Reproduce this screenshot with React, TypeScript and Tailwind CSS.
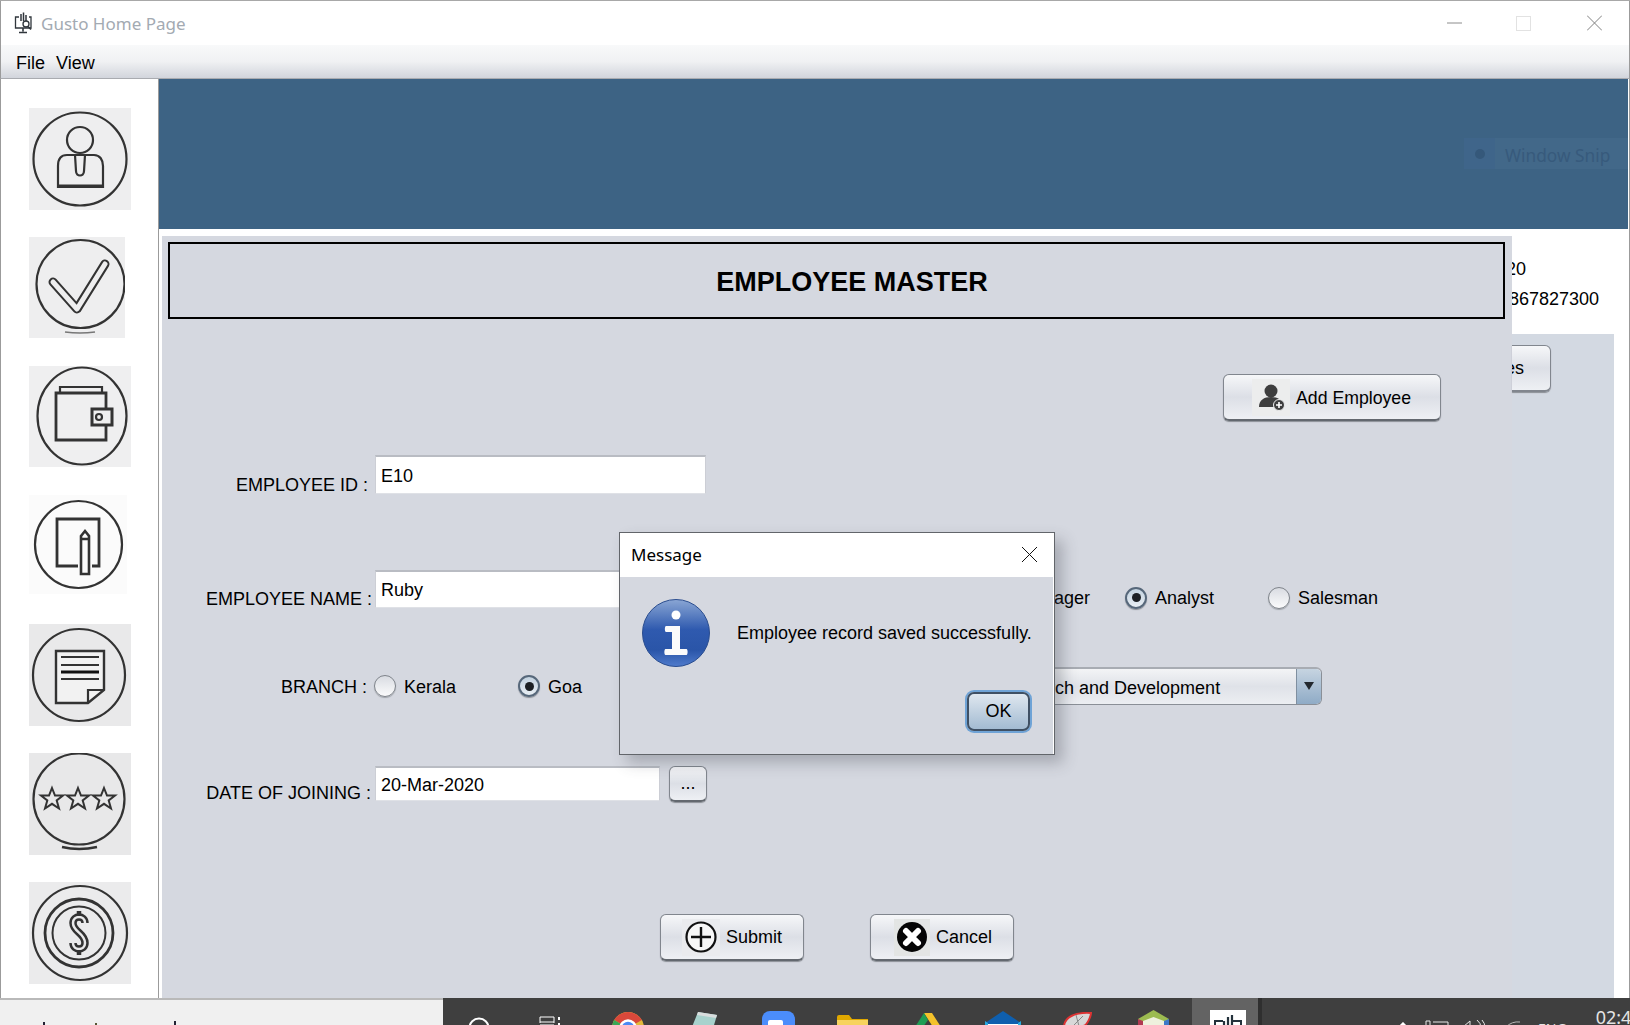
import { ReactNode } from "react";

const btn =
  "flex items-center rounded-[6px] border border-[#81868e] border-b-2 border-b-[#63686f] bg-linear-to-b from-[#f6f7f9] via-[#dcdfe6] to-[#eef0f4] shadow-[0_1px_1px_#8b8f96]";
const field =
  "flex items-center bg-white pt-[2px] pl-[5px] border-t-2 border-t-[#b9bcc3] border-x border-x-[#ccced5] border-b border-b-[#dfe1e6]";

function AppIcon() {
  return (
    <svg width="21" height="22" viewBox="0 0 21 22" fill="none" stroke="#30363c" strokeWidth="1.3">
      <path d="M5 5H1.5V16H17V5H15" />
      <path d="M7 9V2M9.5 9V0.5M12 9V3" strokeWidth="1.5" />
      <circle cx="12" cy="12" r="3" />
      <path d="M14 14.5L17 17.5M9 16V19.5M5 20.5H13" strokeWidth="1.6" />
    </svg>
  );
}

const sideBoxes = ["0 0 102 102", "0 0 96 101", "0 0 102 101", "0 0 98 99", "0 0 102 102", "0 0 102 102", "0 0 102 102"];

function SideIcon({ kind }: { kind: number }) {
  const s = { fill: "none", stroke: "#333333", strokeWidth: 2.2 };
  return (
    <svg viewBox={sideBoxes[kind]} className="h-full w-full">
      {kind === 0 && (
        <g {...s}>
          <circle cx="51" cy="51" r="46.5" />
          <circle cx="51" cy="32" r="13" />
          <path d="M46 47H38C31 47 29 52 29 58V79H74V58C74 52 71 47 65 47H56M46 47L47 63C47 69 55 69 55 63L56 47M46 47H56" />
          <path d="M29 78H74" strokeWidth="3" />
        </g>
      )}
      {kind === 1 && (
        <g fill="none">
          <circle cx="51.5" cy="47" r="44" stroke="#333333" strokeWidth="2.2" />
          <path d="M24 45L48 72L76 27" stroke="#333333" strokeWidth="9" strokeLinecap="round" strokeLinejoin="round" />
          <path d="M24 45L48 72L76 27" stroke="#eeeeef" strokeWidth="5" strokeLinecap="round" strokeLinejoin="round" />
          <path d="M36 95Q51 97 66 95" stroke="#777" strokeWidth="1.5" />
        </g>
      )}
      {kind === 2 && (
        <g {...s}>
          <ellipse cx="53" cy="50" rx="44.5" ry="48.5" />
          <path d="M28 27H77V74H27V27Z" strokeWidth="2.8" />
          <path d="M31 27V21H73V27" />
          <rect x="63" y="43" width="20" height="16" fill="#efeff0" strokeWidth="3" />
          <circle cx="70" cy="51" r="3" />
        </g>
      )}
      {kind === 3 && (
        <g {...s}>
          <circle cx="49.5" cy="49.5" r="43.5" />
          <path d="M49 71H28V24H70V71H63" strokeWidth="2.8" />
          <path d="M52 41L56 36L60 41V79H52V41ZM52 44H60" fill="#fbfbfb" strokeWidth="2.6" />
        </g>
      )}
      {kind === 4 && (
        <g {...s}>
          <circle cx="50" cy="51" r="46" />
          <path d="M27 27H75V66L59 79H27V27Z" fill="#f2f2f2" strokeWidth="2.4" />
          <path d="M59 79V66H75" />
          <path d="M32 33H70M32 41H70M32 55H70" strokeWidth="1.8" />
          <path d="M32 48H70" strokeWidth="2.8" stroke="#111" />
        </g>
      )}
      {kind === 5 && (
        <g {...s}>
          <circle cx="50" cy="46" r="45.5" />
          <path d="M33 94Q50 98 68 94" strokeWidth="2.4" />
          {[23, 49, 75].map(x => (
            <path
              key={x}
              transform={`translate(${x} 46)`}
              d="M0-11L3-3.5H11L4.7 1.4L7 9.5L0 4.8L-7 9.5L-4.7 1.4L-11-3.5H-3Z"
              strokeWidth="2"
            />
          ))}
        </g>
      )}
      {kind === 6 && (
        <g {...s}>
          <circle cx="51" cy="51" r="47" />
          <circle cx="50" cy="51" r="34" strokeWidth="2.8" />
          <circle cx="50" cy="51" r="26.5" strokeWidth="2" />
          <path d="M56 41C56 33 44 33 44 41C44 50 56 51 56 61C56 69 44 69 44 61" strokeWidth="7.5" stroke="#333333" />
          <path d="M56 41C56 33 44 33 44 41C44 50 56 51 56 61C56 69 44 69 44 61" strokeWidth="2.5" stroke="#e9e9ea" />
          <path d="M50 29V34M50 68V73" strokeWidth="4.5" />
        </g>
      )}
    </svg>
  );
}

function InfoIcon() {
  return (
    <svg width="68" height="68" viewBox="0 0 68 68">
      <defs>
        <linearGradient id="infoFill" x1="0" y1="0" x2="0" y2="1">
          <stop offset="0" stopColor="#8aa6d4" />
          <stop offset="0.45" stopColor="#2f5aaf" />
          <stop offset="0.75" stopColor="#2a55a8" />
          <stop offset="1" stopColor="#4f7bcc" />
        </linearGradient>
      </defs>
      <circle cx="34" cy="34" r="33.5" fill="url(#infoFill)" stroke="#2a4d8f" />
      <circle cx="34" cy="16" r="4.5" fill="#fff" />
      <path
        d="M24 27H38V50H44.5C46 50 46 56 44.5 56H23.5C22 56 22 50 23.5 50H30V33H24C22.5 33 22.5 27 24 27Z"
        fill="#fbfbfb"
      />
    </svg>
  );
}

function Radio({ on }: { on?: boolean }) {
  return (
    <span
      className={
        on
          ? "flex h-[22px] w-[22px] shrink-0 items-center justify-center rounded-full border-2 border-[#56677a] bg-linear-to-b from-[#c3d2e0] to-[#e8eef4] shadow-[0_1px_1px_#8b8f96]"
          : "flex h-[22px] w-[22px] shrink-0 items-center justify-center rounded-full border border-[#7f848b] bg-linear-to-b from-[#d9dce2] to-[#fbfbfc] shadow-[0_1px_1px_#a0a4aa]"
      }
    >
      {on && <span className="h-[9px] w-[9px] rounded-full bg-[#1c1f24]" />}
    </span>
  );
}

function RadioOption({ label, on, className }: { label: string; on?: boolean; className: string }) {
  return (
    <div className={`flex items-center gap-[8px] ${className}`}>
      <Radio on={on} />
      <span className="pt-[2px]">{label}</span>
    </div>
  );
}

function SideBar() {
  const sizes = [
    "h-[102px] w-[102px]",
    "h-[101px] w-[96px]",
    "h-[101px] w-[102px]",
    "h-[99px] w-[98px]",
    "h-[102px] w-[102px]",
    "h-[102px] w-[102px]",
    "h-[102px] w-[102px]",
  ];
  const bgs = ["bg-[#eeeeef]", "bg-[#eeeeef]", "bg-[#efeff0]", "bg-[#fbfbfb]", "bg-[#e9e9ea]", "bg-[#e8e8e9]", "bg-[#ebebec]"];
  return (
    <div className="flex w-[159px] shrink-0 flex-col overflow-hidden border-x border-x-[#9b9b9b] bg-white pt-[29px] pl-[28px]">
      {sizes.map((size, i) => (
        <div key={i} className="h-[129px] shrink-0">
          <div className={`${size} ${bgs[i]}`}>
            <SideIcon kind={i} />
          </div>
        </div>
      ))}
    </div>
  );
}

function TrayIcon({ className, children }: { className: string; children: ReactNode }) {
  return <div className={`shrink-0 ${className}`}>{children}</div>;
}

function TaskBar() {
  return (
    <div className="flex h-[27px] shrink-0 overflow-hidden">
      <div className="flex w-[443px] shrink-0 items-end gap-0 border-t-2 border-t-[#b9b9b9] bg-[#f0f0f0] pb-0">
        <span className="mb-[-1px] ml-[43px] h-[4px] w-[2px] bg-[#223]" />
        <span className="ml-[50px] h-[2px] w-[2px] bg-[#553]" />
        <span className="ml-[77px] h-[4px] w-[2px] bg-[#223]" />
      </div>
      <div className="flex min-w-0 flex-1 items-start overflow-hidden bg-[#3f3f3f]">
        <TrayIcon className="mt-[19px] ml-[25px]">
          <svg width="22" height="22"><circle cx="11" cy="11" r="9.5" fill="none" stroke="#fff" strokeWidth="2" /></svg>
        </TrayIcon>
        <TrayIcon className="mt-[18px] ml-[49px]">
          <svg width="24" height="10" fill="none" stroke="#fff"><path d="M1 7V1H15V7M1 6H15M1 9H15" /><path d="M20 1V4M20 7V10" strokeWidth="2" /></svg>
        </TrayIcon>
        <TrayIcon className="mt-[14px] ml-[49px]">
          <svg width="32" height="32" viewBox="0 0 32 32">
            <circle cx="16" cy="16" r="16" fill="#e2b93a" />
            <path d="M16 16L2.2 8A16 16 0 0 1 29.8 8Z" fill="#d9483b" />
            <path d="M16 16L2.2 8A16 16 0 0 0 8 30Z" fill="#3aa757" />
            <circle cx="16" cy="16" r="7.5" fill="#4a8af4" stroke="#fff" strokeWidth="2.5" />
          </svg>
        </TrayIcon>
        <TrayIcon className="mt-[14px] ml-[46px]">
          <svg width="27" height="20">
            <path d="M8 0L27 3L22 20H0Z" fill="#a8d2cd" />
            <path d="M8 0L27 3L26 6L7 3Z" fill="#d9dddd" />
          </svg>
        </TrayIcon>
        <TrayIcon className="mt-[13px] ml-[45px]">
          <div className="relative h-[33px] w-[33px] rounded-[8px] bg-[#4b8dfb]">
            <div className="absolute top-[9px] left-[6px] h-[12px] w-[15px] rounded-[2px] bg-white" />
          </div>
        </TrayIcon>
        <TrayIcon className="mt-[17px] ml-[42px]">
          <svg width="31" height="14">
            <path d="M0 2Q0 0 2 0H12L15 4H31V14H0Z" fill="#e0a800" />
            <path d="M0 5H31V14H0Z" fill="#f7d35e" />
          </svg>
        </TrayIcon>
        <TrayIcon className="mt-[15px] ml-[47px]">
          <svg width="26" height="14">
            <path d="M9 0H17L26 14H18Z" fill="#f4c22b" />
            <path d="M9 0L0 14H8L13 7Z" fill="#1f9d55" />
          </svg>
        </TrayIcon>
        <TrayIcon className="mt-[13px] ml-[44px]">
          <svg width="36" height="14">
            <path d="M0 12L18 0L36 12V14H0Z" fill="#0f5fae" />
            <path d="M3 13H33V14H3Z" fill="#fff" />
            <path d="M0 10L3 12V14H0ZM36 10L33 12V14H36Z" fill="#29abe2" />
          </svg>
        </TrayIcon>
        <TrayIcon className="mt-[14px] ml-[42px]">
          <svg width="29" height="14" fill="none">
            <path d="M1 14C2 5 12 0 28 1C28 4 24 14 20 14Z" fill="#d8d8d8" stroke="#d33" strokeWidth="2" />
            <path d="M13 3L16 14M20 4L10 14" stroke="#888" />
          </svg>
        </TrayIcon>
        <TrayIcon className="mt-[12px] ml-[46px]">
          <svg width="31" height="16">
            <path d="M15.5 0L31 9V16H0V9Z" fill="#9cbb50" />
            <path d="M15.5 7L26 11V16H5V11Z" fill="#eef1dd" />
            <path d="M0 9L5 11V16H0Z" fill="#b03a52" />
            <path d="M31 9L26 11V16H31Z" fill="#3c78c8" />
          </svg>
        </TrayIcon>
        <div className="ml-[23px] flex h-full w-[66px] shrink-0 items-start bg-[#636363] pt-[12px] pl-[18px]">
          <div className="flex h-[20px] w-[36px] justify-center bg-white pt-[5px]">
            <svg width="28" height="12" fill="none" stroke="#24323c">
              <path d="M1 12V6H9M19 6H27V12" strokeWidth="2" />
              <path d="M10 6V12M14 2V12M18 0V12" strokeWidth="2.2" />
            </svg>
          </div>
        </div>
        <div className="h-full w-[4px] shrink-0 bg-[#2f2f2f]" />
        <TrayIcon className="mt-[24px] ml-[136px]">
          <svg width="10" height="6" fill="none" stroke="#fff" strokeWidth="1.5"><path d="M1 5L5 1L9 5" /></svg>
        </TrayIcon>
        <TrayIcon className="mt-[22px] ml-[17px]">
          <svg width="24" height="8" fill="none" stroke="#e8e8e8"><path d="M1 8V1H5V8M8 2H23V8" /></svg>
        </TrayIcon>
        <TrayIcon className="mt-[22px] ml-[13px]">
          <svg width="24" height="8" fill="none" stroke="#e8e8e8"><path d="M1 7L8 1V8M15 0Q19 3 19 8M20 0Q23 3 23 8" /></svg>
        </TrayIcon>
        <TrayIcon className="mt-[23px] ml-[19px]">
          <svg width="16" height="6" fill="none" stroke="#b8b8b8"><path d="M1 6Q7 0 15 1" /></svg>
        </TrayIcon>
        <span className="mt-[21px] ml-[17px] shrink-0 font-['Noto_Sans'] text-[14px] leading-[19px] text-[#e4e4e4]">ENG</span>
        <span className="mt-[7px] ml-[29px] shrink-0 font-['Noto_Sans'] text-[18px] leading-[24px] text-[#e4e4e4]">02:45</span>
      </div>
    </div>
  );
}

export default function App() {
  return (
    <div className="relative flex h-[1025px] w-[1630px] flex-col overflow-hidden border-t border-t-[#a8a8a8] bg-white font-['Liberation_Sans'] text-[18px] leading-[21px] text-black">
      {/* title bar */}
      <div className="flex h-[44px] shrink-0 items-center border-x border-x-[#9b9b9b] pr-[27px] pl-[13px]">
        <AppIcon />
        <span className="ml-[6px] font-['Noto_Sans'] text-[17px] text-[#a3aab2]">Gusto Home Page</span>
        <div className="ml-auto flex items-center gap-[54px]">
          <svg width="15" height="16" stroke="#8c8c8c" className="-translate-x-[2px]"><path d="M0 8H15" /></svg>
          <div className="h-[15px] w-[15px] -translate-x-[2px] border border-[#e2e2e2]" />
          <svg width="15" height="16" stroke="#808080"><path d="M0 0.5L15 15.5M15 0.5L0 15.5" /></svg>
        </div>
      </div>

      {/* menu */}
      <div className="flex h-[34px] shrink-0 items-center gap-[11px] border-x border-x-[#9b9b9b] border-b border-b-[#a9abb0] bg-linear-to-b from-[#f8f9fa] via-[#f0f1f3] to-[#d2d5dc] pt-[4px] pl-[15px]">
        <span>File</span>
        <span>View</span>
      </div>

      {/* main */}
      <div className="flex h-[919px] shrink-0">
        <SideBar />
        <div className="flex min-w-0 flex-1 flex-col border-r border-r-[#9b9b9b] pr-[1px]">
          <div className="flex h-[150px] shrink-0 items-start justify-end bg-[#3d6384] pt-[59px]">
            <div className="flex h-[31px] w-[164px] items-center bg-[#426889]">
              <div className="flex h-full w-[31px] items-center justify-center bg-[#3f658a]">
                <span className="h-[10px] w-[10px] rounded-full bg-[#35587a]" />
              </div>
              <span className="ml-[10px] pt-[3px] font-['Noto_Sans'] text-[17.3px] whitespace-nowrap text-[#375a7c]">Window Snip</span>
            </div>
          </div>

          <div className="flex min-h-0 flex-1">
            {/* form panel */}
            <div className="mt-[7px] ml-[3px] flex w-[1350px] shrink-0 flex-col bg-[#d5d8e0] pt-[6px]">
              <div className="ml-[6px] flex h-[77px] w-[1337px] items-center justify-center border-2 border-black pt-[4px] pl-[31px] text-[27px] font-bold">
                EMPLOYEE MASTER
              </div>

              <div className={`${btn} mt-[55px] ml-[1061px] h-[47px] w-[218px] pl-[28px]`}>
                <div className="flex h-[37px] w-[38px] items-center justify-center bg-[#eceded]">
                  <svg width="27" height="28" viewBox="0 0 27 28">
                    <circle cx="13" cy="8" r="6.5" fill="#3e3e3e" />
                    <path d="M1 24C1 17 6 14 13 14C20 14 25 17 25 24Z" fill="#3e3e3e" />
                    <circle cx="21" cy="22" r="5.5" fill="#3e3e3e" stroke="#eceded" />
                    <path d="M18 22H24M21 19V25" stroke="#fff" strokeWidth="1.6" />
                  </svg>
                </div>
                <span className="ml-[6px] pt-[2px] text-[17.7px]">Add Employee</span>
              </div>

              <div className="mt-[34px] flex h-[39px]">
                <span className="mt-[20px] w-[206px] text-right whitespace-nowrap">EMPLOYEE ID :</span>
                <div className={`${field} ml-[7px] h-full w-[331px]`}>E10</div>
              </div>

              <div className="mt-[76px] flex h-[38px]">
                <span className="mt-[19px] w-[210px] text-right whitespace-nowrap">EMPLOYEE NAME :</span>
                <div className={`${field} ml-[3px] h-full w-[331px]`}>Ruby</div>
                <div className="mt-[16px] ml-[283px] flex items-start">
                  <RadioOption label="Manager" className="w-[136px]" />
                  <RadioOption label="Analyst" on className="w-[143px]" />
                  <RadioOption label="Salesman" className="w-[143px]" />
                </div>
              </div>

              <div className="mt-[59px] flex h-[38px] items-center">
                <span className="w-[205px] pt-[2px] text-right whitespace-nowrap">BRANCH :</span>
                <RadioOption label="Kerala" className="ml-[7px] w-[144px]" />
                <RadioOption label="Goa" on className="w-[471px]" />
                <div className="flex h-full w-[333px] rounded-[6px] border border-[#8a8f97] border-t-2 border-t-[#a8acb3] bg-linear-to-b from-[#f3f4f6] via-[#dfe2e8] to-[#eceef2]">
                  <span className="flex flex-1 items-center pt-[3px] pl-[7px] whitespace-nowrap">Research and Development</span>
                  <div className="flex w-[25px] items-start justify-center rounded-r-[5px] border-l border-l-[#7f8fa0] bg-linear-to-b from-[#c6d4e1] to-[#8fabc6] pt-[12px]">
                    <svg width="12" height="10"><path d="M1 1H11L6 9Z" fill="#22282e" /></svg>
                  </div>
                </div>
              </div>

              <div className="mt-[61px] flex h-[36px]">
                <span className="mt-[17px] w-[209px] text-right whitespace-nowrap">DATE OF JOINING :</span>
                <div className={`${field} ml-[4px] h-[35px] w-[285px] pl-[4px]`}>20-Mar-2020</div>
                <div className={`${btn} ml-[9px] w-[38px] justify-center pb-[1px]`}>...</div>
              </div>

              <div className="mt-[112px] ml-[498px] flex h-[47px] gap-[66px]">
                <div className={`${btn} w-[144px] pl-[21px]`}>
                  <div className="flex h-[37px] w-[38px] items-center justify-center bg-[#eaebee]">
                    <svg width="32" height="32" viewBox="0 0 32 32">
                      <circle cx="16" cy="16" r="14.5" fill="#f7f7f7" stroke="#111" strokeWidth="2.2" />
                      <path d="M16 6V26M6 16H26" stroke="#111" strokeWidth="2.4" />
                    </svg>
                  </div>
                  <span className="ml-[6px]">Submit</span>
                </div>
                <div className={`${btn} w-[144px] pl-[23px]`}>
                  <div className="flex h-[37px] w-[36px] items-center justify-center bg-[#e3e5e4]">
                    <svg width="32" height="32" viewBox="0 0 32 32">
                      <circle cx="16" cy="16" r="15" fill="#050505" />
                      <path d="M10 10L22 22M22 10L10 22" stroke="#fff" strokeWidth="6" strokeLinecap="round" />
                    </svg>
                  </div>
                  <span className="ml-[6px]">Cancel</span>
                </div>
              </div>
            </div>

            {/* what shows of the window behind the panel */}
            <div className="flex min-w-0 flex-1 flex-col pt-[30px]">
              <div className="flex justify-end overflow-hidden pr-[102px] whitespace-nowrap">20-Mar-2020</div>
              <div className="mt-[9px] flex justify-end overflow-hidden pr-[29px] whitespace-nowrap">9867827300</div>
              <div className="mt-[24px] mr-[14px] flex-1 bg-[#d3d9e2] pt-[11px]">
                <div className="flex h-[47px] w-[39px] items-center justify-end overflow-hidden rounded-r-[6px] border border-l-0 border-[#81868e] border-b-2 bg-linear-to-b from-[#f6f7f9] via-[#dcdfe6] to-[#eef0f4] pr-[26px] whitespace-nowrap shadow-[0_1px_1px_#8b8f96]">
                  Employees
                </div>
              </div>
            </div>
          </div>
        </div>
      </div>

      <TaskBar />

      {/* message dialog */}
      <div className="absolute top-[531px] left-[619px] flex h-[223px] w-[436px] flex-col border border-[#62656a] bg-white shadow-[8px_8px_14px_rgba(60,64,72,0.3)]">
        <div className="flex h-[44px] shrink-0 items-center justify-between pr-[16px] pb-[2px] pl-[11px]">
          <span className="font-['Noto_Sans'] text-[17px]">Message</span>
          <svg width="17" height="17" stroke="#111"><path d="M1 1L16 16M16 1L1 16" /></svg>
        </div>
        <div className="flex flex-1 flex-col border-r border-r-white bg-[#d5d8e0] pt-[22px]">
          <div className="ml-[22px] flex items-center gap-[27px]">
            <InfoIcon />
            <span className="whitespace-nowrap">Employee record saved successfully.</span>
          </div>
          <div className="mt-[25px] mr-[23px] flex h-[39px] w-[63px] items-center justify-center self-end rounded-[7px] border-2 border-[#3f5064] bg-linear-to-b from-[#dfe7ef] to-[#a3bbd2] shadow-[0_0_0_2px_#6fa3d6]">
            OK
          </div>
        </div>
      </div>
    </div>
  );
}
